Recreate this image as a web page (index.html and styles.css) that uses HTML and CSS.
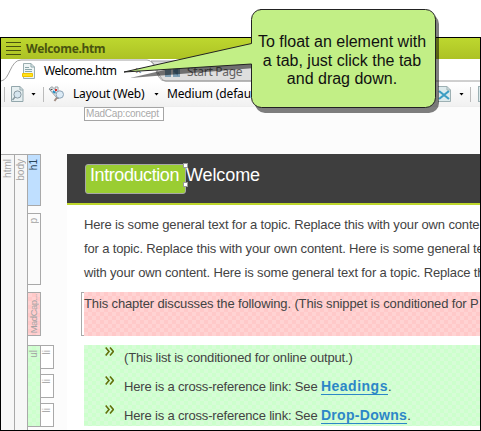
FILE: index.html
```html
<!DOCTYPE html>
<html lang="en">
<head>
<meta charset="utf-8">
<title>Welcome.htm</title>
<link rel="stylesheet" href="styles.css">
</head>
<body>
<div class="window">
  <header class="titlebar">
    <span class="grip"><i></i><i></i><i></i><i></i></span>
    <span class="title">Welcome.htm</span>
  </header>
  <nav class="tabs">
    <svg class="tabshape" width="479" height="23" viewBox="0 0 479 23">
      <path d="M152 1H479V22H164C157 22 155 8 150 3Z" fill="#fff"/>
      <path d="M150 2H268V22H165C158 22 156 6 150 2Z" fill="#dedede" stroke="#a0a0a0"/>
      <path d="M0 22C9 21 9 1 20 1H146C156 1 154 22 164 22H479" fill="none" stroke="#a0a0a0"/>
    </svg>
    <div class="tab active">
      <svg width="13" height="16" viewBox="0 0 13 16"><path d="M1.500.5H9L12.500 4V15.500H1.500Z" fill="#eef5f5" stroke="#9baeb0"/><path d="M9 .5V4H12.500M3 4.500H7M3 6.500H10M3 8.500H10" fill="none" stroke="#8ba6a9"/><path d="M.5 10.500H10.500V13.500H.5Z" fill="#ffe21c" stroke="#f0c400"/></svg>
      <span>Welcome.htm</span><b class="close">×</b>
    </div>
    <div class="tab start">
      <svg width="16" height="12" viewBox="0 0 16 12"><path d="M0 2H6V11H0ZM8 1H15V11H8Z" fill="#7f9fb3"/><path d="M8 5L13 1V10Z" fill="#56809d"/></svg>
      <span>Start Page</span>
    </div>
  </nav>
  <div class="toolbar">
    <i class="sep"></i>
    <svg class="ic-preview" width="13" height="16" viewBox="0 0 13 16"><path d="M.5.5H9L12 3.500V15.500H.5Z" fill="#e6eff1" stroke="#93a7ac"/><path d="M9 .5V4H12" fill="none" stroke="#93a7ac"/><circle cx="6.500" cy="8.500" r="3.600" fill="#d5e5ee" stroke="#8999a2"/><path d="M4 11L1.500 14" stroke="#8799a0" stroke-width="1.500"/></svg>
    <i class="caret c1"></i>
    <i class="sep s2"></i>
    <svg class="ic-layout" width="17" height="16" viewBox="0 0 17 16"><path d="M1 3L4 .7 13 9 10 13Z" fill="#eef1f3" stroke="#8f989d"/><path d="M7 1H10V6L8 8Z" fill="#eef1f3" stroke="#9aa3a8"/><path d="M2.500 4L4.500 3" stroke="#44494d" stroke-width="1.200"/><path d="M8 3V5" stroke="#d92b2b" stroke-width="2"/><path d="M5 5L7 7" stroke="#258bc0" stroke-width="2"/><circle cx="11.800" cy="8.500" r="3.700" fill="#dcebf6" stroke="#8ba2b5"/><path d="M9 11.500L6.500 15" stroke="#a08c82" stroke-width="2"/></svg>
    <span class="layout-name">Layout (Web)</span>
    <i class="caret c2"></i>
    <span class="medium-name">Medium (default)</span>
    <span class="tools-right">
      <svg width="13" height="16" viewBox="0 0 13 16"><path d="M0 .5H9L12.500 4V15.500H0" fill="#dceaec" stroke="#9db0b3"/><path d="M9 .5V4H12.500" fill="none" stroke="#9db0b3"/><path d="M1 5L11 13M11 5L1 13" stroke="#3c9dc3" stroke-width="2.200"/></svg>
      <i class="caret c3"></i><i class="sep s3"></i><i class="cut"></i>
    </span>
  </div>
  <main class="editor">
    <div class="concept"><span>MadCap:concept</span></div>
    <div class="body-row">
      <div class="bar root first"><span>html</span></div>
      <div class="bar root"><span>body</span></div>
      <div class="blocks">
        <div class="bar h1"><span>h1</span></div>
        <div class="bar p"><span>p</span></div>
        <div class="bar snip"><span>MadCap...</span></div>
        <div class="list">
          <div class="bar ul"><span>ul</span></div>
          <div class="items"><div class="bar"><span>li</span></div><div class="bar"><span>li</span></div><div class="bar"><span>li</span></div></div>
        </div>
      </div>
      <article class="page">
        <h1><span class="intro">Introduction<i class="handle top"></i><i class="handle bottom"></i></span><span class="welcome">Welcome</span></h1>
        <p class="para">Here is some general text for a topic. Replace this with your own conte<br>for a topic. Replace this with your own content. Here is some general te<br>with your own content. Here is some general text for a topic. Replace th</p>
        <div class="snippet"><p>This chapter discusses the following. (This snippet is conditioned for P</p></div>
        <ul>
          <li><svg width="9" height="9" viewBox="0 0 9 9"><path d="M.7.5L4 4.500.7 8.500M5 .5L8.300 4.500 5 8.500"/></svg><span>(This list is conditioned for online output.)</span></li>
          <li><svg width="9" height="9" viewBox="0 0 9 9"><path d="M.7.5L4 4.500.7 8.500M5 .5L8.300 4.500 5 8.500"/></svg><span>Here is a cross-reference link: See <a class="l1">Headings</a>.</span></li>
          <li><svg width="9" height="9" viewBox="0 0 9 9"><path d="M.7.5L4 4.500.7 8.500M5 .5L8.300 4.500 5 8.500"/></svg><span>Here is a cross-reference link: See <a class="l2">Drop-Downs</a>.</span></li>
        </ul>
      </article>
    </div>
  </main>
</div>
<aside class="callout">
  <svg width="320" height="108" viewBox="0 0 320 108">
    <path d="M137 5H309A10 10 0 0 1 319 15V94A10 10 0 0 1 309 104H145A10 10 0 0 1 135 94V59L10 69 135 40V15Z" fill="#000" fill-opacity=".5"/>
    <path d="M140.500.5H305.500A10 10 0 0 1 315.500 10.500V88.500A10 10 0 0 1 305.500 98.500H141.500A10 10 0 0 1 131.500 88.500V55L4 63 131.500 34.500V10.500A10 10 0 0 1 141.500.5Z" fill="#c2ef86" stroke="#222"/>
  </svg>
  <p>To float an element with<br>a tab, just click the tab<br>and drag down.</p>
</aside>
</body>
</html>
```
FILE: styles.css
```css
* { box-sizing: border-box; }
body { margin: 0; padding-top: 37px; height: 431px; overflow: hidden; position: relative; background: #fff; font-family: "Liberation Sans", Arial, sans-serif; }
svg { display: block; flex: none; }
p, h1, ul { margin: 0; padding: 0; }
span { white-space: nowrap; }
.window { width: 481px; height: 394px; border: 1px solid #000; overflow: hidden; background: #fcfcfc; }

.titlebar { height: 21px; display: flex; align-items: center; padding-left: 5px; background: linear-gradient(#bdd72f, #adc224); }
.grip { display: flex; flex-direction: column; gap: 3px; width: 15px; }
.grip i { height: 1px; background: #48520f; }
.title { margin-left: 5px; font: bold 12px/20px "Open Sans", sans-serif; letter-spacing: -.35px; color: #49540f; }

.tabs { position: relative; height: 23px; display: flex; background: #fff; font: 12px/22px "Noto Sans", sans-serif; letter-spacing: -.5px; }
.tabshape { position: absolute; left: 0; top: 0; }
.tab { position: relative; display: flex; align-items: center; color: #000; }
.active { width: 156px; padding-left: 21px; }
.active span { width: 73px; margin-left: 9px; padding-top: 1px; }
.close { margin-left: 18px; font-size: 12px; color: #888; }
.start { padding: 3px 0 0 8px; color: #626262; }
.start span { margin-left: 6px; letter-spacing: -.3px; }

.toolbar { height: 25px; display: flex; align-items: center; background: linear-gradient(#fff, #f1f1f1); border-bottom: 1px solid #eee; font: 12px/22px "Noto Sans", sans-serif; color: #000; }
.sep { width: 1px; height: 15px; margin-left: 3px; background: #bbb; flex: none; }
.ic-preview { margin-left: 6px; }
.caret { flex: none; width: 5px; height: 3px; background: #000; clip-path: polygon(0 0, 100% 0, 50% 100%); }
.c1 { margin-left: 7px; }
.s2 { margin-left: 7px; }
.ic-layout { margin-left: 4px; }
.layout-name { flex: none; width: 71px; margin-left: 8px; letter-spacing: -.18px; }
.c2 { margin-left: 10px; }
.medium-name { flex: none; width: 110px; margin-left: 8px; letter-spacing: -.15px; }
.tools-right { flex: none; display: flex; align-items: center; margin-left: 161px; }
.c3 { margin-left: 8px; }
.s3 { margin-left: 6px; }
.cut { width: 4px; height: 16px; margin-left: 7px; background: #dceaec; border: 1px solid #9db0b3; }

.editor { height: 322px; }
.concept { height: 47px; padding-left: 83px; }
.concept span { display: block; width: 80px; height: 14px; border: 1px solid #a5a5a5; background: #fff; padding-left: 1px; font-size: 10px; line-height: 12px; letter-spacing: -.2px; color: #aaa; }
.body-row { display: flex; height: 276px; }
.bar { width: 13px; border: 1px solid #a9a9a9; border-left: 0; padding-top: 4px; display: flex; justify-content: center; background: #fbfbfb; flex: none; }
.bar span { writing-mode: vertical-rl; transform: rotate(180deg); font-size: 10px; line-height: 12px; height: fit-content; color: #a3a3a3; }
.root { height: 280px; background: #f7f7f7; }
.first { width: 14px; }
.blocks { width: 39px; }
.blocks .bar { box-shadow: -1px 0 #a9a9a9; }
.blocks .h1 { height: 52px; background: #bfdfff; }
.bar.h1 span { color: #294558; }
.blocks .p { height: 72px; margin-top: 7px; }
.blocks .snip { height: 44px; margin-top: 7px; padding: 1px 0 0; background: repeating-conic-gradient(#ffc9c9 0 25%, #ffd2d2 0 50%) 0 0 / 8px 8px; }
.blocks .snip span { font-size: 9.5px; letter-spacing: -.5px; }
.list { display: flex; margin-top: 9px; }
.list .ul { height: 82px; background: repeating-conic-gradient(#ccffcc 0 25%, #d5fdd5 0 50%) 0 0 / 8px 8px; }
.items { display: flex; flex-direction: column; gap: 5px; }
.items .bar { height: 24px; background: #fff; }

.page { width: 413px; background: #fff; overflow: hidden; color: #434343; font-size: 13px; letter-spacing: -.15px; flex: none; }
h1 { display: flex; height: 51px; padding: 10px 0 0 18px; background: #3e3e3e; border-bottom: 2px solid #bed72b; font-weight: normal; font-size: 18px; line-height: 21px; letter-spacing: 0; color: #fff; }
.intro { position: relative; width: 101px; height: 30px; padding-left: 4px; border: 1px solid #a8a8a8; border-radius: 3px; background: #9acd32; line-height: 20px; letter-spacing: -.42px; }
.welcome { letter-spacing: -.1px; line-height: 22px; }
.handle { position: absolute; right: -3px; width: 5px; height: 5px; background: #fff; border: 1px solid #999; }
.top { top: -2px; }
.bottom { bottom: 6px; }
.para { height: 87px; padding: 8px 0 0 17px; line-height: 24px; white-space: nowrap; }
.snippet { height: 44px; margin-left: 14px; border-left: 1px solid #a9a9a9; padding-left: 2px; background: linear-gradient(#a9a9a9, #a9a9a9) 0 0 / 3px 1px no-repeat, linear-gradient(#a9a9a9, #a9a9a9) 0 100% / 3px 1px no-repeat; }
.snippet p { height: 44px; line-height: 24px; letter-spacing: -.13px; white-space: nowrap; background: repeating-conic-gradient(#ffc9c9 0 25%, #ffd3d3 0 50%) 0 0 / 8px 8px; }
ul { list-style: none; height: 81px; margin: 9px 0 0 17px; background: repeating-conic-gradient(#ccffcc 0 25%, #d7fcd7 0 50%) 0 0 / 8px 8px; }
li { height: 29px; display: flex; padding: 1px 0 0 21px; line-height: 24px; }
li svg { margin-top: 1px; fill: none; stroke: #62700b; stroke-width: 1.6; }
li span { margin-left: 10px; letter-spacing: -.17px; }
a { font-size: 14px; font-weight: bold; line-height: 15px; color: #2c87c7; border-bottom: 1px solid #2c87c7; display: inline-block; }
.l1 { letter-spacing: .5px; }
.l2 { letter-spacing: .3px; }

.callout { position: absolute; left: 120px; top: 9px; width: 320px; height: 108px; }
.callout p { position: absolute; left: 130px; top: 24px; width: 184px; text-align: center; font-size: 16px; line-height: 18.500px; color: #111; }
```
